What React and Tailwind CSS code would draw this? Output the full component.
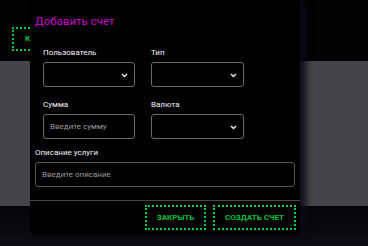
import React from 'react';

function Chevron() {
    return (
        <svg width="7" height="5" viewBox="0 0 7 5" className="absolute right-[6px] top-[10px]">
            <path d="M1 1 L3.5 3.5 L6 1" fill="none" stroke="#f0f0f0" strokeWidth="1.3" />
        </svg>
    );
}

function Field({ label, children }) {
    return (
        <div className="flex flex-col">
            <label className="text-[8px] leading-[10px] h-[10px] mb-[4px] text-gray-100">{label}</label>
            {children}
        </div>
    );
}

function SelectBox() {
    return (
        <div className="relative h-[25px] border border-[#6b6b6b] rounded-[3px] bg-black">
            <Chevron />
        </div>
    );
}

export default function App() {
    return (
        <div className="relative w-[368px] h-[246px] overflow-hidden bg-[#020203]" style={{ fontFamily: 'Roboto, "Noto Sans", sans-serif' }}>
            {/* page behind the modal */}
            <div className="h-[61px] pt-[24px] pl-[12px]">
                <button className="h-[24px] pl-[11px] pr-[10px] border-2 border-dotted border-[#00c83c] text-[#00c83c] text-[8px] font-bold">КОНТРАГЕНТЫ</button>
            </div>
            <div className="h-[145px] bg-[#444345]" />
            <div className="h-[40px] bg-gradient-to-b from-[#060608] to-[#0c0c12]" />

            {/* modal */}
            <div className="absolute left-[30px] top-0 w-[270px] h-[235px] bg-black rounded-b-[6px] shadow-[6px_0_6px_rgba(10,10,18,0.9)] flex flex-col">
                <div className="pt-[13px] pl-[5px] h-[38px]">
                    <h2 className="text-[11.5px] leading-[16px] text-[#cc00cc]">Добавить счет</h2>
                </div>
                <div className="pl-[13px] pt-[10px] grid grid-cols-[92px_93px] gap-x-[16px] gap-y-[13px]">
                    <Field label="Пользователь"><SelectBox /></Field>
                    <Field label="Тип"><SelectBox /></Field>
                    <Field label="Сумма">
                        <input placeholder="Введите сумму" className="h-[25px] border border-[#6b6b6b] rounded-[3px] bg-black px-[6px] text-[8px] text-gray-200 placeholder:text-[#9a9a9a] outline-none" />
                    </Field>
                    <Field label="Валюта"><SelectBox /></Field>
                </div>
                <div className="pl-[5px] pr-[5px] pt-[9px]">
                    <Field label="Описание услуги">
                        <input placeholder="Введите описание" className="h-[25px] w-[260px] border border-[#555] rounded-[3px] bg-black px-[6px] text-[8px] text-gray-200 placeholder:text-[#9a9a9a] outline-none" />
                    </Field>
                </div>
                <div className="mt-[13px] border-t border-[#464646] flex justify-end gap-[7px] pt-[4px] pr-[4px]">
                    <button className="w-[61px] h-[25px] border-2 border-dotted border-[#00d040] text-[#00c23a] text-[8px] font-bold">ЗАКРЫТЬ</button>
                    <button className="w-[83px] h-[25px] border-2 border-dotted border-[#00d040] text-[#00c23a] text-[8px] font-bold">СОЗДАТЬ СЧЕТ</button>
                </div>
            </div>
        </div>
    );
}
